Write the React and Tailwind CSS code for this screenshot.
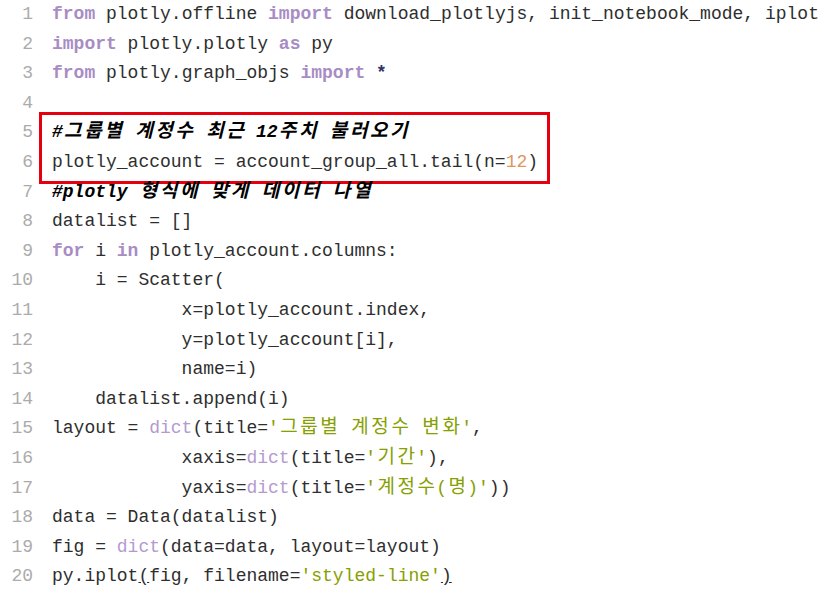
import React from "react";

const K = ({ children }) => <span className="font-bold text-[#a88cc4]">{children}</span>;
const F = ({ children }) => <span className="text-[#b49ad0]">{children}</span>;
const S = ({ children }) => <span className="text-[#86a000]">{children}</span>;
const H = ({ children }) => (
  <span className="-mr-[1.3px] pl-[1.3px] text-[19px] leading-none tracking-[2.6px]">{children}</span>
);
const C = ({ children }) => <span className="font-bold italic text-black">{children}</span>;

const Row = ({ n, children }) => (
  <div className="flex h-[29.6px] items-center">
    <span className="w-[33px] shrink-0 text-right text-[#ababab]">{n}</span>
    <span className="ml-[19px] whitespace-pre">{children}</span>
  </div>
);

const App = () => {
  return (
    <div
      className="h-[596px] w-[826px] overflow-hidden bg-white text-[18px] leading-[29.6px] text-[#2e2e2e]"
      style={{ fontFamily: '"Liberation Mono", "Noto Sans CJK KR", monospace' }}
    >
      <Row n="1">
        <K>from</K> plotly.offline <K>import</K> download_plotlyjs, init_notebook_mode, iplot
      </Row>
      <Row n="2">
        <K>import</K> plotly.plotly <K>as</K> py
      </Row>
      <Row n="3">
        <K>from</K> plotly.graph_objs <K>import</K> <span className="font-bold text-[#333366]">*</span>
      </Row>
      <Row n="4"></Row>
      <div className="flex">
        <div className="w-[33px] shrink-0 text-right text-[#ababab]">
          <div className="h-[29.6px]">5</div>
          <div className="h-[29.6px]">6</div>
        </div>
        <div className="ml-[9px] -my-[3px] w-[505px] py-[3px] pl-[10px] ring-[3px] ring-[#e4000f]">
          <div className="flex h-[29.6px] items-center whitespace-pre">
            <C>
              #<H>그룹별</H> <H>계정수</H> <H>최근</H> 12<H>주치</H> <H>불러오기</H>
            </C>
          </div>
          <div className="flex h-[29.6px] items-center whitespace-pre">
            plotly_account = account_group_all.tail(n=<span className="text-[#e0955a]">12</span>)
          </div>
        </div>
      </div>
      <Row n="7">
        <C>
          #plotly <H>형식에</H> <H>맞게</H> <H>데이터</H> <H>나열</H>
        </C>
      </Row>
      <Row n="8">datalist = []</Row>
      <Row n="9">
        <K>for</K> i <K>in</K> plotly_account.columns:
      </Row>
      <Row n="10">{"    i = Scatter("}</Row>
      <Row n="11">{"            x=plotly_account.index,"}</Row>
      <Row n="12">{"            y=plotly_account[i],"}</Row>
      <Row n="13">{"            name=i)"}</Row>
      <Row n="14">{"    datalist.append(i)"}</Row>
      <Row n="15">
        layout = <F>dict</F>(title=
        <S>
          '<H>그룹별</H> <H>계정수</H> <H>변화</H>'
        </S>
        ,
      </Row>
      <Row n="16">
        {"            xaxis="}
        <F>dict</F>(title=
        <S>
          '<H>기간</H>'
        </S>
        ),
      </Row>
      <Row n="17">
        {"            yaxis="}
        <F>dict</F>(title=
        <S>
          '<H>계정수</H>(<H>명</H>)'
        </S>
        ))
      </Row>
      <Row n="18">data = Data(datalist)</Row>
      <Row n="19">
        fig = <F>dict</F>(data=data, layout=layout)
      </Row>
      <Row n="20">
        py.iplot<span className="underline">(</span>fig, filename=<S>'styled-line'</S>
        <span className="underline">)</span>
      </Row>
    </div>
  );
};

export default App;
